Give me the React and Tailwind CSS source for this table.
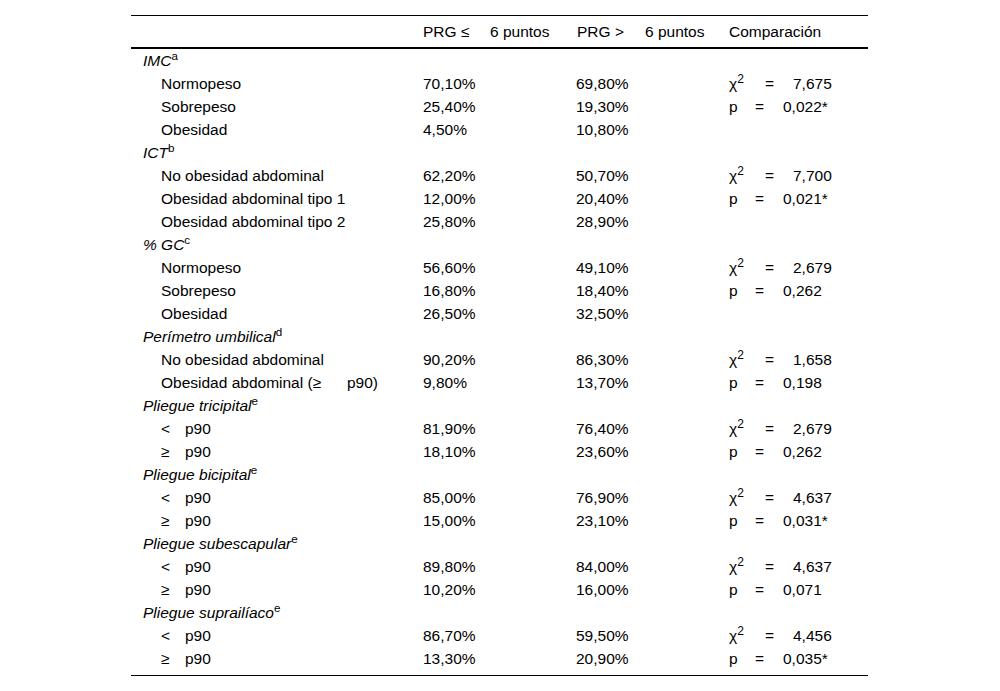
import React from "react";

const sections = [
  {
    title: "IMC",
    sup: "a",
    rows: [
      ["Normopeso", "70,10%", "69,80%", ["chi", "7,675"]],
      ["Sobrepeso", "25,40%", "19,30%", ["p", "0,022*"]],
      ["Obesidad", "4,50%", "10,80%", null],
    ],
  },
  {
    title: "ICT",
    sup: "b",
    rows: [
      ["No obesidad abdominal", "62,20%", "50,70%", ["chi", "7,700"]],
      ["Obesidad abdominal tipo 1", "12,00%", "20,40%", ["p", "0,021*"]],
      ["Obesidad abdominal tipo 2", "25,80%", "28,90%", null],
    ],
  },
  {
    title: "% GC",
    sup: "c",
    rows: [
      ["Normopeso", "56,60%", "49,10%", ["chi", "2,679"]],
      ["Sobrepeso", "16,80%", "18,40%", ["p", "0,262"]],
      ["Obesidad", "26,50%", "32,50%", null],
    ],
  },
  {
    title: "Perímetro umbilical",
    sup: "d",
    rows: [
      ["No obesidad abdominal", "90,20%", "86,30%", ["chi", "1,658"]],
      [["Obesidad abdominal (≥", "p90)", true], "9,80%", "13,70%", ["p", "0,198"]],
    ],
  },
  {
    title: "Pliegue tricipital",
    sup: "e",
    rows: [
      [["<", "p90"], "81,90%", "76,40%", ["chi", "2,679"]],
      [["≥", "p90"], "18,10%", "23,60%", ["p", "0,262"]],
    ],
  },
  {
    title: "Pliegue bicipital",
    sup: "e",
    rows: [
      [["<", "p90"], "85,00%", "76,90%", ["chi", "4,637"]],
      [["≥", "p90"], "15,00%", "23,10%", ["p", "0,031*"]],
    ],
  },
  {
    title: "Pliegue subescapular",
    sup: "e",
    rows: [
      [["<", "p90"], "89,80%", "84,00%", ["chi", "4,637"]],
      [["≥", "p90"], "10,20%", "16,00%", ["p", "0,071"]],
    ],
  },
  {
    title: "Pliegue suprailíaco",
    sup: "e",
    rows: [
      [["<", "p90"], "86,70%", "59,50%", ["chi", "4,456"]],
      [["≥", "p90"], "13,30%", "20,90%", ["p", "0,035*"]],
    ],
  },
];

function Label({ v }) {
  if (Array.isArray(v)) {
    return (
      <span className="flex">
        <span className={v[2] ? "w-[186px]" : "w-[24px]"}>{v[0]}</span>
        <span>{v[1]}</span>
      </span>
    );
  }
  return <span>{v}</span>;
}

function Stat({ s }) {
  if (!s) return null;
  const chi = s[0] === "chi";
  return (
    <span className="flex">
      {chi ? (
        <span className="w-[36px]">
          χ<sup className="text-[12px]">2</sup>
        </span>
      ) : (
        <span className="w-[26px]">p</span>
      )}
      <span className="w-[28px]">=</span>
      <span>{s[1]}</span>
    </span>
  );
}

const cols = "grid grid-cols-[280px_153px_152px_152px]";

export default function App() {
  return (
    <div
      className="w-[1000px] h-[691px] bg-white text-black pt-[15px]"
      style={{ fontFamily: '"Liberation Sans", Arial, sans-serif' }}
    >
      <div className="ml-[131px] w-[737px] text-[15.5px] leading-[23px]">
        <div className={`${cols} border-t border-black border-b-2 h-[34px] items-center`}>
          <div className="pl-3"></div>
          <div className="pl-3 flex">
            <span className="w-[67px]">PRG ≤</span>
            <span>6 puntos</span>
          </div>
          <div className="pl-[13px] flex">
            <span className="w-[68px]">PRG &gt;</span>
            <span>6 puntos</span>
          </div>
          <div className="pl-[13px]">Comparación</div>
        </div>
        <div className="border-b border-black pb-[5px]">
          {sections.map((sec, i) => (
            <React.Fragment key={i}>
              <div className={`${cols} h-[23px]`}>
                <div className="pl-3">
                  <i>{sec.title}</i>
                  <sup>{sec.sup}</sup>
                </div>
              </div>
              {sec.rows.map((r, j) => (
                <div key={j} className={`${cols} h-[23px]`}>
                  <div className="pl-[30px]">
                    <Label v={r[0]} />
                  </div>
                  <div className="pl-3">{r[1]}</div>
                  <div className="pl-3">{r[2]}</div>
                  <div className="pl-[13px]">
                    <Stat s={r[3]} />
                  </div>
                </div>
              ))}
            </React.Fragment>
          ))}
        </div>
      </div>
    </div>
  );
}
